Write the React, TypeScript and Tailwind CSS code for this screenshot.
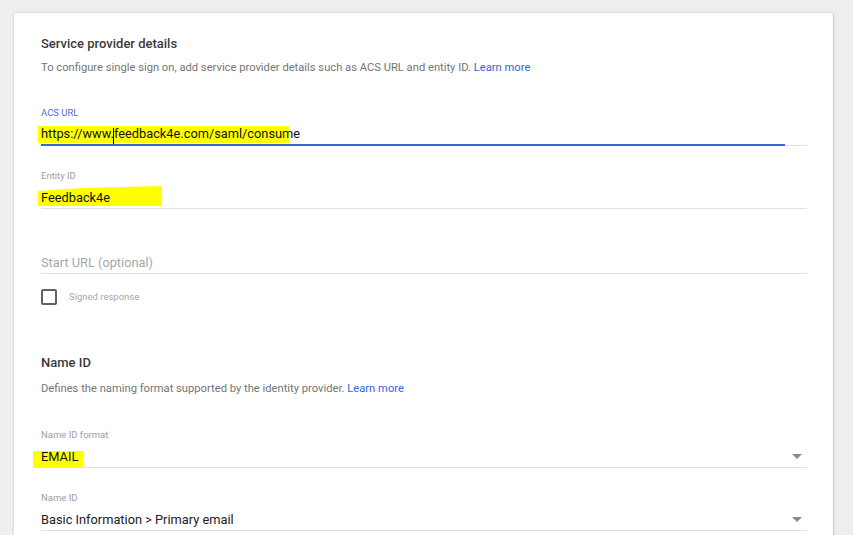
import React from 'react'

const font = { fontFamily: 'Roboto, "Liberation Sans", sans-serif' }

function Caret() {
  return (
    <svg width="10" height="5" viewBox="0 0 10 5" className="absolute right-[5px] top-[7px]">
      <path d="M0 0h10L5 5z" fill="#8a8a8a" />
    </svg>
  )
}

export default function App() {
  return (
    <div className="min-h-[535px] w-[853px] overflow-hidden bg-[#eeeeee] pt-[13px] pl-[14px]" style={font}>
      <div className="h-[540px] w-[819px] rounded-[2px] bg-white pl-[27px] pr-[26px] pt-[23px] shadow-[0_0_2px_rgba(0,0,0,0.25),1px_1px_2px_rgba(0,0,0,0.1)]">
        {/* Service provider details */}
        <h2 className="text-[13px] leading-[16px] font-medium text-[#3a3a3a]">Service provider details</h2>
        <p className="mt-[8px] text-[11.2px] leading-[16px] text-[#757575]">
          To configure single sign on, add service provider details such as ACS URL and entity ID.{' '}
          <span className="text-[#3367d6]">Learn more</span>
        </p>

        {/* ACS URL */}
        <div className="mt-[31px] text-[9.5px] leading-[12px] text-[#5c6bd6]">ACS URL</div>
        <div className="relative mt-[5px] h-[20px]">
          <div className="absolute left-[-3px] top-[2px] h-[17px] w-[251px] bg-[#ffff00]" />
          <div className="relative text-[12.8px] leading-[20px] text-[#111]">
            https://www.<span className="relative"><span className="absolute left-[-1px] top-[2px] h-[16px] w-[1px] bg-black" /></span>feedback4e.com/saml/consume
          </div>
        </div>
        <div className="flex h-[2px]">
          <div className="h-[2px] w-[744px] bg-[#3367d6]" />
          <div className="mt-[1px] h-px flex-1 bg-[#e0e0e0]" />
        </div>

        {/* Entity ID */}
        <div className="mt-[24px] text-[9.5px] leading-[12px] text-[#9e9e9e]">Entity ID</div>
        <div className="relative mt-[6px] h-[20px]">
          <div className="absolute left-[-3px] top-[-2px] h-[20px] w-[124px] bg-[#ffff00] [clip-path:polygon(0_25%,35%_10%,100%_0,100%_100%,0_100%)]" />
          <div className="relative text-[12.8px] leading-[20px] text-[#111]">Feedback4e</div>
        </div>
        <div className="h-px bg-[#e0e0e0]" />

        {/* Start URL */}
        <div className="mt-[44px] h-[20px] text-[12.8px] leading-[20px] text-[#a8a8a8]">Start URL (optional)</div>
        <div className="h-px bg-[#e0e0e0]" />

        <div className="mt-[15px] flex items-center">
          <div className="h-[16px] w-[16px] rounded-[2px] border-2 border-[#616161]" />
          <span className="ml-[12px] text-[9.5px] text-[#a8a8a8]">Signed response</span>
        </div>

        {/* Name ID */}
        <h2 className="mt-[50px] text-[13px] leading-[16px] font-medium text-[#3a3a3a]">Name ID</h2>
        <p className="mt-[10px] text-[11.2px] leading-[16px] text-[#757575]">
          Defines the naming format supported by the identity provider.{' '}
          <span className="text-[#3367d6]">Learn more</span>
        </p>

        <div className="mt-[32px] text-[9.5px] leading-[12px] text-[#9e9e9e]">Name ID format</div>
        <div className="relative mt-[6px] h-[20px]">
          <div className="absolute left-[-8px] top-[4px] h-[17px] w-[50px] bg-[#ffff00]" />
          <div className="relative text-[12.8px] leading-[20px] text-[#111]">EMAIL</div>
          <Caret />
        </div>
        <div className="h-px bg-[#e0e0e0]" />

        <div className="mt-[24px] text-[9.5px] leading-[12px] text-[#9e9e9e]">Name ID</div>
        <div className="relative mt-[6px] h-[20px]">
          <div className="text-[12.8px] leading-[20px] text-[#212121]">Basic Information &gt; Primary email</div>
          <Caret />
        </div>
        <div className="h-px bg-[#e0e0e0]" />
      </div>
    </div>
  )
}
